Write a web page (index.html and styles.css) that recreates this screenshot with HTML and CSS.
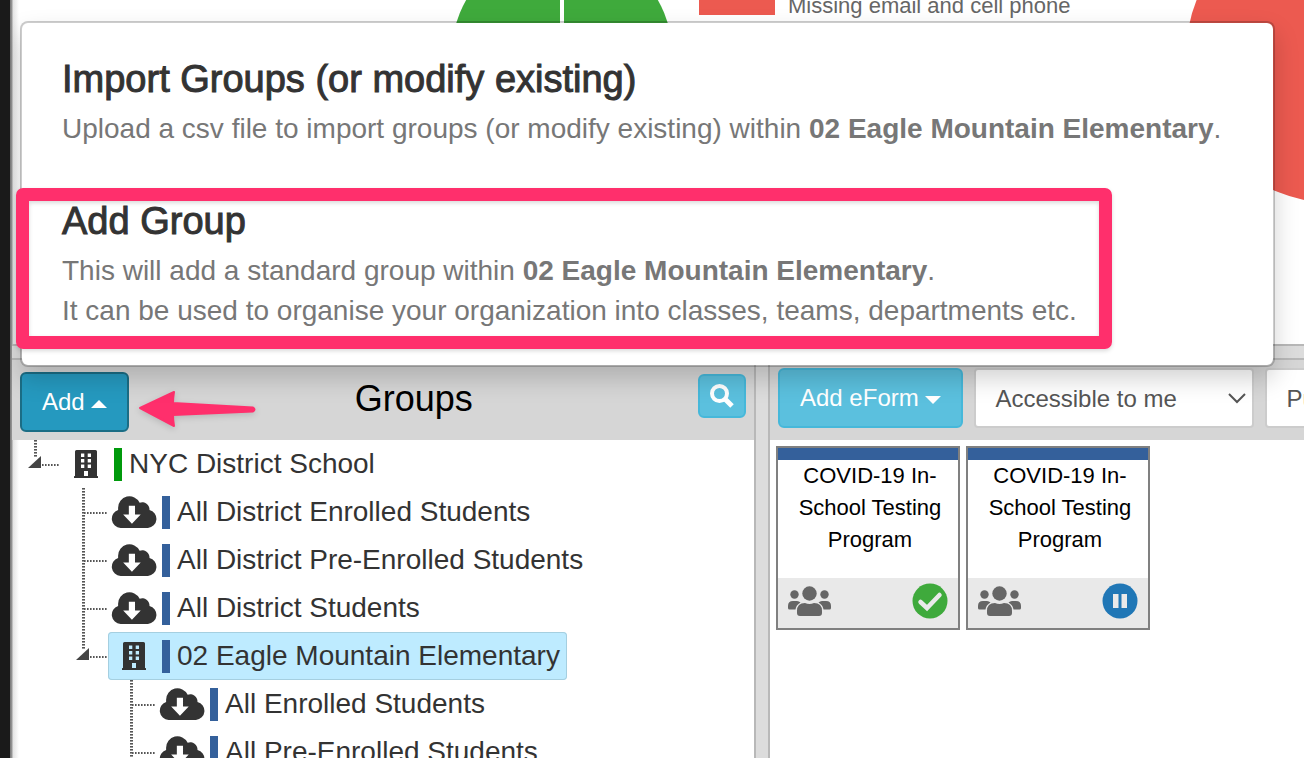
FILE: index.html
```html
<!DOCTYPE html>
<html lang="en">
<head>
<meta charset="utf-8">
<title>Groups</title>
<link rel="stylesheet" href="styles.css">
</head>
<body>
<svg class="defs" aria-hidden="true">
  <symbol id="building" viewBox="0 0 24 28"><path fill-rule="evenodd" d="M2.500 0H21.500Q23 0 23 1.500V26H23.500Q24 26 24 26.500V28H0V26.500Q0 26 .5 26H1V1.500Q1 0 2.500 0ZM7 3.500V7H10.300V3.500ZM13.700 3.500V7H17V3.500ZM7 9V12.500H10.300V9ZM13.700 9V12.500H17V9ZM7 14.500V18H10.300V14.500ZM13.700 14.500V18H17V14.500ZM10 21V26H14V21Z"/></symbol>
  <symbol id="cloud" viewBox="0 0 44 31"><path fill-rule="evenodd" d="M9 31A9 9 0 0 1 6.600 13.500V11.500A11 11 0 0 1 27.500 6.500A7 7 0 0 1 37 13.500A8.900 8.900 0 0 1 35.500 31ZM17 9.500V18H11.500L20 27L28.500 18H23V9.500Z"/></symbol>
  <symbol id="people" viewBox="0 0 43 30"><circle cx="21.500" cy="7.500" r="7.200"/><circle cx="6.500" cy="8.500" r="4.200"/><circle cx="36.500" cy="8.500" r="4.200"/><path d="M12 30Q9 30 9 27V25Q9 17 17 17Q21.500 19 26 17Q34 17 34 25V27Q34 30 31 30ZM1.500 23.500Q0 23.500 0 22V20Q0 15 5 15H9Q11 15 12.500 16.500Q8 19 7.500 23.500ZM41.500 23.500Q43 23.500 43 22V20Q43 15 38 15H34Q32 15 30.500 16.500Q35 19 35.500 23.500Z"/></symbol>
</svg>
<div class="app">
  <section class="charts">
    <svg class="pie-left" viewBox="0 55 222 166" aria-hidden="true"><circle cx="111" cy="110" r="110.500" fill="#3faa3c"/><path d="M111 0V220" stroke="#fff" stroke-width="4"/></svg>
    <div class="legend"><span class="swatch"></span><span>Missing email and cell phone</span></div>
    <svg class="pie-right" viewBox="0 0 296 204" aria-hidden="true"><circle cx="148" cy="55" r="148" fill="#ec5a50"/></svg>
  </section>
  <div class="splitter-h"></div>
  <div class="panes">
    <section class="groups">
      <header class="bar">
        <div class="add-wrap">
          <button class="btn btn-add" type="button">Add <span class="caret up"></span></button>
          <div class="popover">
            <div class="option">
              <h2>Import Groups (or modify existing)</h2>
              <p>Upload a csv file to import groups (or modify existing) within <b>02 Eagle Mountain Elementary</b>.</p>
            </div>
            <div class="option marked">
              <h2>Add Group</h2>
              <p>This will add a standard group within <b>02 Eagle Mountain Elementary</b>.<br>It can be used to organise your organization into classes, teams, departments etc.</p>
            </div>
          </div>
          <svg class="arrow" viewBox="0 0 120 40" aria-hidden="true"><path d="M3 19L37 3Q36 9 36 14L116 18.500Q119 20.500 116 22.500L36 26Q36 31 37 37Z" fill="#ff2f6c" stroke="#ff2f6c" stroke-width="2" stroke-linejoin="round"/></svg>
        </div>
        <h1>Groups</h1>
        <button class="btn btn-search" type="button" aria-label="Search"><svg viewBox="0 0 24 24" width="24" height="24" fill="none" stroke="#fff" stroke-width="4"><circle cx="9.500" cy="9.500" r="7.500"/><path d="M15 15L22 22" stroke-width="5"/></svg></button>
      </header>
      <ul class="tree">
        <li class="last"><div class="row"><span class="toggle"></span><a href="#" class="label"><svg class="building"><use href="#building"/></svg><i class="mark green"></i>NYC District School</a></div>
          <ul>
            <li><div class="row"><a href="#" class="label"><svg class="cloud"><use href="#cloud"/></svg><i class="mark"></i>All District Enrolled Students</a></div></li>
            <li><div class="row"><a href="#" class="label"><svg class="cloud"><use href="#cloud"/></svg><i class="mark"></i>All District Pre-Enrolled Students</a></div></li>
            <li><div class="row"><a href="#" class="label"><svg class="cloud"><use href="#cloud"/></svg><i class="mark"></i>All District Students</a></div></li>
            <li class="last"><div class="row"><span class="toggle"></span><a href="#" class="label selected"><svg class="building"><use href="#building"/></svg><i class="mark"></i>02 Eagle Mountain Elementary</a></div>
              <ul>
                <li><div class="row"><a href="#" class="label"><svg class="cloud"><use href="#cloud"/></svg><i class="mark"></i>All Enrolled Students</a></div></li>
                <li><div class="row"><a href="#" class="label"><svg class="cloud"><use href="#cloud"/></svg><i class="mark"></i>All Pre-Enrolled Students</a></div></li>
              </ul>
            </li>
          </ul>
        </li>
      </ul>
    </section>
    <div class="splitter-v"></div>
    <section class="forms">
      <header class="bar form-bar">
        <button class="btn btn-form" type="button">Add eForm <span class="caret"></span></button>
        <select class="select access" aria-label="Access"><option>Accessible to me</option></select>
        <select class="select status" aria-label="Status"><option>Published</option></select>
      </header>
      <div class="cards">
        <article class="card">
          <h3>COVID-19 In-School Testing Program</h3>
          <footer><svg class="people"><use href="#people"/></svg><svg class="badge" viewBox="0 0 36 36"><circle cx="18" cy="18" r="17.500" fill="#3faa3c"/><path d="M8.500 19L15 25L27.500 12" fill="none" stroke="#eaeaea" stroke-width="4.500" stroke-linecap="round"/></svg></footer>
        </article>
        <article class="card">
          <h3>COVID-19 In-School Testing Program</h3>
          <footer><svg class="people"><use href="#people"/></svg><svg class="badge" viewBox="0 0 36 36"><circle cx="18" cy="18" r="17.500" fill="#2077b6"/><path d="M11 11H16.500V25H11ZM19.500 11H25V25H19.500Z" fill="#eaeaea"/></svg></footer>
        </article>
      </div>
    </section>
  </div>
</div>
</body>
</html>
```
FILE: styles.css
```css
*, ::before, ::after { box-sizing: border-box; }
body { margin: 0; font-family: "Liberation Sans", Arial, sans-serif; font-size: 28px; color: #333; background: #fff; }
h1, h2, h3, p, ul { margin: 0; padding: 0; font-weight: 400; }
ul { list-style: none; }
.defs { position: absolute; width: 0; height: 0; }
.app { height: 100vh; overflow: hidden; display: flex; flex-direction: column; border-left: 10px solid #1a1a1a; background: linear-gradient(90deg, #777, #999 2px, #e4e4e4 3px, #fff 9px); }

.charts { display: flex; align-items: flex-start; padding-left: 441px; overflow: hidden; padding-bottom: 140px; }
.pie-left { flex: none; width: 222px; height: 166px; }
.legend { flex: none; display: flex; align-items: flex-end; gap: 13px; width: 513px; height: 18px; padding-left: 26px; font-size: 22px; line-height: 24px; color: #666; white-space: nowrap; }
.swatch { width: 76px; height: 15px; margin-bottom: 3px; background: #ec5a50; }
.pie-right { flex: none; width: 296px; height: 204px; }

.splitter-h { flex: none; height: 16px; background: #dcdcdc; border-top: 2px solid #b8b8b8; border-bottom: 2px solid #b8b8b8; margin-left: 2px; }
.panes { flex: 1; min-height: 0; display: flex; padding-left: 2px; }
.groups { flex: 742 1 0; min-width: 0; }
.splitter-v { flex: none; width: 16px; background: #dcdcdc; border-left: 2px solid #b8b8b8; border-right: 2px solid #b8b8b8; }
.forms { flex: 534 1 0; min-width: 0; overflow: hidden; }

.bar { height: 80px; display: flex; align-items: flex-start; justify-content: space-between; background: #d6d6d6; padding: 12px 8px; }
.bar h1 { font-size: 36px; line-height: 54px; color: #000; }
.btn { font: inherit; font-size: 24px; color: #fff; background: #5bc0de; border: 2px solid #46b8da; border-radius: 6px; padding: 0 20px; cursor: pointer; white-space: nowrap; }
.btn-add { height: 60px; background: #2599bf; border-color: #1b6d85; }
.btn-form { height: 60px; }
.btn-search { width: 48px; height: 44px; padding: 0; margin-top: 2px; display: grid; place-items: center; }
.caret { display: inline-block; border: 8px solid transparent; border-bottom-width: 0; border-top-color: #fff; vertical-align: 2px; }
.caret.up { border-bottom: 8px solid #fff; border-top-width: 0; }

.add-wrap { position: relative; }
.popover { position: absolute; left: 0; bottom: calc(100% + 5px); z-index: 2; width: max-content; padding: 31px 52px 34px 40px; background: #fff; background-clip: padding-box; border: 2px solid rgba(0,0,0,.2); border-radius: 8px; box-shadow: 0 12px 24px rgba(0,0,0,.175); white-space: nowrap; }
.option h2 { font-size: 38px; line-height: 50px; -webkit-text-stroke: 1px #333; }
.option p { line-height: 40px; color: #777; padding-top: 5px; }
.option + .option { margin-top: 47px; }
.marked { position: relative; }
.marked::after { content: ""; position: absolute; left: -46px; top: -8px; width: 1096px; bottom: -18px; border: 13px solid #ff2f6c; border-radius: 7px; box-shadow: 0 2px 4px rgba(0,0,0,.15), inset 0 2px 4px rgba(0,0,0,.15); }
.arrow { position: absolute; left: calc(100% + 8px); top: 17px; width: 120px; height: 40px; filter: drop-shadow(0 2px 3px rgba(0,0,0,.15)); }

.tree li { padding-left: 48px; background: repeating-linear-gradient(#555 0 1px, #999 1px 2px, transparent 2px 3px) 22px 0 / 3px 100% no-repeat; }
.tree li.last { background-size: 3px 18px; }
.row { position: relative; height: 48px; display: flex; }
.row::before { content: ""; position: absolute; left: -24px; top: 24px; width: 24px; height: 2px; background: repeating-linear-gradient(90deg, #555 0 1px, #999 1px 2px, transparent 2px 3px); }
.toggle { position: absolute; left: -32px; top: 16px; z-index: 1; width: 16px; height: 13px; background: #444; clip-path: polygon(13px 0, 13px 12px, 0 12px); }
.label { display: flex; align-items: center; height: 48px; color: #333; text-decoration: none; border-radius: 4px; white-space: nowrap; padding-right: 7px; }
.label.selected { background: #beebff; box-shadow: inset 0 0 0 1px #a5cfe0; }
.building { width: 24px; height: 28px; margin: 0 16px 0 14px; fill: #333; }
.cloud { width: 46px; height: 32px; margin: 0 5px 0 3px; fill: #333; }
.mark { width: 8px; height: 33px; margin-right: 7px; background: #34609b; }
.mark.green { background: #009a0c; }

.form-bar { justify-content: flex-start; padding-top: 8px; gap: 11px; }
.select { appearance: none; flex: none; height: 60px; border: 2px solid #ccc; border-radius: 4px; font: inherit; font-size: 24px; color: #555; padding: 0 19px; background: #fff; }
.access { width: 280px; background: #fff url("data:image/svg+xml,%3Csvg xmlns='http://www.w3.org/2000/svg' width='18' height='11'%3E%3Cpath d='M1 1L9 9L17 1' fill='none' stroke='%23555' stroke-width='2'/%3E%3C/svg%3E") right 6px center no-repeat; }
.status { width: 200px; }
.cards { display: flex; flex-wrap: wrap; gap: 6px; padding: 6px; }
.card { width: 184px; height: 184px; display: flex; flex-direction: column; border: 2px solid #808080; }
.card h3 { flex: 1; border-top: 12px solid #34609b; font-size: 22px; line-height: 32px; color: #000; text-align: center; padding: 0 10px 0 14px; }
.card footer { height: 50px; display: flex; align-items: center; justify-content: space-between; padding: 0 10px 4px; background: #e9e9e9; }
.people { width: 43px; height: 30px; fill: #666; }
.badge { width: 36px; height: 36px; }
```
